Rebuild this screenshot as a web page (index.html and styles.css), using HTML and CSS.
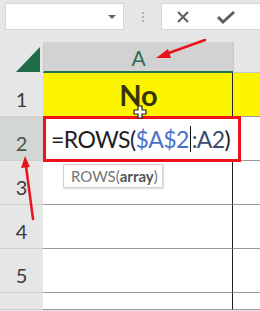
FILE: index.html
```html
<!DOCTYPE html>
<html lang="en">
<head>
    <meta charset="UTF-8">
    <meta name="viewport" content="width=device-width, initial-scale=1.0">
    <title>ROWS formula</title>
    <link rel="stylesheet" href="styles.css">
</head>

<body>

    <div class="topbar">
        <div class="name-box">
            <span class="drop-arrow"></span>
        </div>
        <div class="dots">
            <span></span><span></span><span></span>
        </div>
        <div class="formula-box">
            <svg class="fx-icon" width="16" height="16" viewBox="0 0 16 16">
                <path d="M3 3 L13 13 M13 3 L3 13" stroke="#5f5f5f" stroke-width="2" fill="none"/>
            </svg>
            <svg class="fx-icon" width="20" height="16" viewBox="0 0 20 16">
                <path d="M2 8 L7 13 L18 3" stroke="#5f5f5f" stroke-width="3" fill="none"/>
            </svg>
        </div>
    </div>

    <div class="sheet">
        <div class="corner">
            <svg width="26" height="26" viewBox="0 0 26 26">
                <polygon points="0,26 24,1 24,26" fill="#1e6b47"/>
            </svg>
        </div>
        <div class="col-head selected">A</div>
        <div class="col-head"></div>

        <div class="row-head">1</div>
        <div class="cell yellow title">No</div>
        <div class="cell yellow"></div>

        <div class="row-head active">2</div>
        <div class="cell edit">
            <div class="edit-box">
                <span class="f-plain">=ROWS(</span><span class="f-ref">$A$2</span><span class="caret"></span><span class="f-ref2">:A2</span><span class="f-plain">)</span>
            </div>
            <div class="tip">ROWS(<b>array</b>)</div>
        </div>
        <div class="cell"></div>

        <div class="row-head">3</div>
        <div class="cell"></div>
        <div class="cell"></div>

        <div class="row-head">4</div>
        <div class="cell"></div>
        <div class="cell"></div>

        <div class="row-head">5</div>
        <div class="cell"></div>
        <div class="cell"></div>

        <div class="row-head"></div>
        <div class="cell"></div>
        <div class="cell"></div>
    </div>

    <!-- mouse cursor -->
    <svg class="pointer" width="14" height="14" viewBox="0 0 14 14">
        <path d="M5 1 H9 V5 H13 V9 H9 V13 H5 V9 H1 V5 H5 Z" fill="#fff" stroke="#222" stroke-width="1.2"/>
    </svg>

    <!-- red annotation arrows -->
    <svg class="arrows" width="260" height="311" viewBox="0 0 260 311">
        <line x1="205" y1="40" x2="166" y2="54" stroke="#e8141b" stroke-width="2.5" stroke-linecap="round"/>
        <polygon points="156,58 168,49 171,58" fill="#e8141b"/>
        <line x1="33" y1="219" x2="26" y2="166" stroke="#e8141b" stroke-width="2.5" stroke-linecap="round"/>
        <polygon points="25,156 21,168 30,167" fill="#e8141b"/>
    </svg>

</body>
</html>
```

FILE: styles.css
```css
* {
    margin: 0;
    padding: 0;
    box-sizing: border-box;
}

body {
    width: 260px;
    height: 311px;
    overflow: hidden;
    background: #e6e6e6;
    font-family: Lato, "Open Sans", Arial, sans-serif;
    position: relative;
}

.topbar {
    height: 42px;
    padding-top: 3px;
    display: flex;
    align-items: flex-start;
}

.name-box {
    margin-left: 5px;
    width: 119px;
    height: 27px;
    background: #fff;
    border: 1px solid #d6d6d6;
    display: flex;
    align-items: center;
    justify-content: flex-end;
    padding-right: 7px;
}

.drop-arrow {
    width: 0;
    height: 0;
    border-left: 4px solid transparent;
    border-right: 4px solid transparent;
    border-top: 4px solid #666;
}

.dots {
    width: 37px;
    height: 27px;
    display: flex;
    flex-direction: column;
    align-items: center;
    justify-content: center;
    gap: 2px;
}

.dots span {
    width: 2px;
    height: 2px;
    background: #b0b0b0;
}

.formula-box {
    flex: 1;
    height: 27px;
    background: #fff;
    border: 1px solid #d6d6d6;
    border-right: none;
    display: flex;
    align-items: center;
    padding-left: 13px;
    gap: 25px;
}

.sheet {
    display: grid;
    grid-template-columns: 43px 190px 1fr;
    grid-template-rows: 31px repeat(5, 44px) 17px;
}

.corner {
    display: flex;
    align-items: flex-end;
    padding-left: 16px;
    padding-bottom: 1px;
}

.col-head {
    background: #e6e6e6;
    border-bottom: 1px solid #c8c8c8;
    border-left: 1px solid #c8c8c8;
}

.col-head.selected {
    background: #d2d2d2;
    border-bottom: 2px solid #217346;
    color: #2e6b55;
    font-size: 21px;
    display: flex;
    align-items: center;
    justify-content: center;
    padding-top: 2px;
}

.row-head {
    background: #e6e6e6;
    border-bottom: 1px solid #cfcfcf;
    color: #3c3c3c;
    font-size: 20px;
    display: flex;
    align-items: flex-end;
    justify-content: center;
    padding-bottom: 5px;
}

.row-head.active {
    background: #d3d7d3;
    color: #4a524c;
}

.cell {
    background: #fff;
    border-bottom: 1px solid #9a9a9a;
}

.sheet .cell:nth-child(3n+2) {
    border-right: 1px solid #222;
}

.yellow {
    background: #fdf500;
}

.title {
    font-weight: 700;
    font-size: 29px;
    color: #36350c;
    display: flex;
    align-items: center;
    justify-content: center;
    padding-left: 2px;
}

.edit {
    position: relative;
    background: #fff;
}

.edit-box {
    position: absolute;
    left: 0;
    top: -1px;
    width: 198px;
    height: 46px;
    border: 3px solid #ee1119;
    background: #fff;
    display: flex;
    align-items: center;
    padding-left: 5px;
    font-size: 23px;
    letter-spacing: -0.6px;
    white-space: nowrap;
    z-index: 2;
}

.f-plain {
    color: #1e1e1e;
}

.f-ref {
    color: #4a73c8;
}

.f-ref2 {
    color: #3c4b6c;
}

.caret {
    width: 1px;
    height: 26px;
    margin: 0 1px;
    background: #111;
}

.tip {
    position: absolute;
    left: 20px;
    top: 47px;
    width: 100px;
    height: 24px;
    background: #fff;
    border: 1px solid #d2d2d2;
    box-shadow: 1px 1px 2px rgba(0, 0, 0, 0.15);
    color: #757575;
    font-size: 15px;
    padding-left: 7px;
    line-height: 22px;
    z-index: 3;
}

.tip b {
    color: #555;
}

.pointer {
    position: absolute;
    left: 133px;
    top: 105px;
    z-index: 4;
}

.arrows {
    position: absolute;
    left: 0;
    top: 0;
    z-index: 5;
}
```
